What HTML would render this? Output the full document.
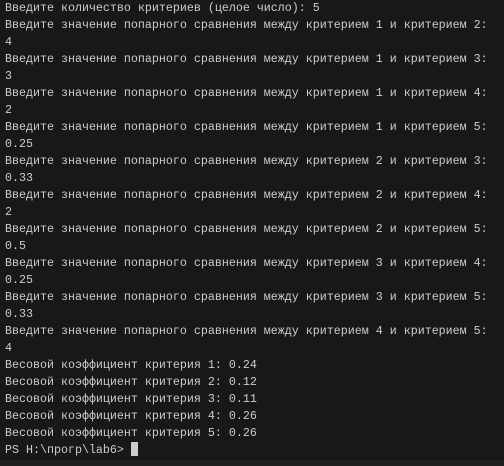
<!DOCTYPE html>
<html><head><meta charset="utf-8"><style>
html,body{margin:0;padding:0;background:#181818;width:504px;height:466px;overflow:hidden}
pre{margin:0;position:absolute;left:5px;top:0;font-family:"Liberation Mono","DejaVu Sans Mono",monospace;font-size:11.67px;line-height:17px;color:#cccccc;white-space:pre}
.cur{display:inline-block;width:7px;height:14px;background:#cccccc;vertical-align:-3px}
.bot{position:absolute;left:0;top:460px;width:504px;height:6px;background:#1f1f1f}
</style></head><body>
<pre>Введите количество критериев (целое число): 5
Введите значение попарного сравнения между критерием 1 и критерием 2:
4
Введите значение попарного сравнения между критерием 1 и критерием 3:
3
Введите значение попарного сравнения между критерием 1 и критерием 4:
2
Введите значение попарного сравнения между критерием 1 и критерием 5:
0.25
Введите значение попарного сравнения между критерием 2 и критерием 3:
0.33
Введите значение попарного сравнения между критерием 2 и критерием 4:
2
Введите значение попарного сравнения между критерием 2 и критерием 5:
0.5
Введите значение попарного сравнения между критерием 3 и критерием 4:
0.25
Введите значение попарного сравнения между критерием 3 и критерием 5:
0.33
Введите значение попарного сравнения между критерием 4 и критерием 5:
4
Весовой коэффициент критерия 1: 0.24
Весовой коэффициент критерия 2: 0.12
Весовой коэффициент критерия 3: 0.11
Весовой коэффициент критерия 4: 0.26
Весовой коэффициент критерия 5: 0.26
PS H:\прогр\lab6&gt; <span class="cur"></span></pre>
<div class="bot"></div>
</body></html>
